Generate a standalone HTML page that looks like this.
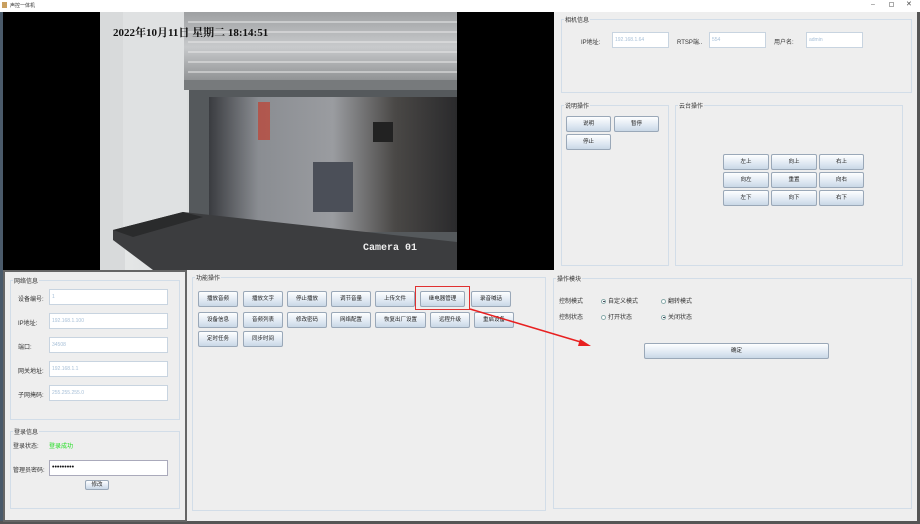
<!DOCTYPE html>
<html><head><meta charset="utf-8">
<style>
*{margin:0;padding:0;box-sizing:border-box}
body{width:920px;height:524px;overflow:hidden;background:#eeeeee;font-family:"Liberation Sans","Noto Sans CJK SC",sans-serif;font-size:6px;color:#222;position:relative}
.a{position:absolute}
.grp{position:absolute;border:1px solid #d2dde8}
.gt{position:absolute;top:-5px;left:2px;background:#eeeeee;padding:0 1px;font-size:6px;color:#333}
.fld{position:absolute;background:#fff;border:1px solid #c8d4e0;height:16px;font-size:5px;color:#a8c0d8;padding-left:2px;line-height:14px}
.btn{position:absolute;height:16px;border:1px solid #9aa8b8;border-radius:2px;background:linear-gradient(#fdfeff,#dfe8f2 60%,#c9d7e6);font-size:5.5px;text-align:center;line-height:14px;color:#222}
.lbl{position:absolute;font-size:6px;color:#333}
.rad{display:inline-block;width:5px;height:5px;border:1px solid #8aa;border-radius:50%;background:#fff;vertical-align:middle;margin-right:2px;position:relative}
.rad.on::after{content:"";position:absolute;left:1px;top:1px;width:1.5px;height:1.5px;background:#334;border-radius:50%}
</style></head><body>
<!-- title bar -->
<div class="a" style="left:0;top:0;width:920px;height:12px;background:#fff"></div>
<div class="a" style="left:2px;top:2px;width:5px;height:6px;background:#c9a060"></div>
<div class="a" style="left:10px;top:2px;font-size:5px;color:#333">声控一体机</div>
<div class="a" style="left:871px;top:1px;font-size:7px;color:#666">–</div>
<div class="a" style="left:889px;top:2px;width:5px;height:5px;border:1px solid #aaa"></div>
<div class="a" style="left:906px;top:0px;font-size:7px;color:#444">✕</div>
<div class="a" style="left:0;top:12px;width:3px;height:512px;background:#4a5a6a"></div>
<div class="a" style="left:917px;top:12px;width:3px;height:512px;background:#555"></div>
<div class="a" style="left:0;top:521px;width:920px;height:3px;background:#555"></div>

<!-- video -->
<div class="a" style="left:3px;top:12px;width:551px;height:258px;background:#000;overflow:hidden">
<svg width="551" height="258" style="position:absolute;left:0;top:0">
<defs>
<linearGradient id="wall" x1="0" x2="1"><stop offset="0" stop-color="#e8eaea"/><stop offset="0.5" stop-color="#cfd1d2"/><stop offset="1" stop-color="#b5b8ba"/></linearGradient>
<linearGradient id="blind" x1="0" y1="0" x2="0" y2="1"><stop offset="0" stop-color="#9ea0a2"/><stop offset="0.5" stop-color="#c8cacc"/><stop offset="1" stop-color="#8e9092"/></linearGradient>
<linearGradient id="glass" x1="0" x2="1"><stop offset="0" stop-color="#3a3c40"/><stop offset="0.2" stop-color="#8a8d92"/><stop offset="0.5" stop-color="#9a9ca0"/><stop offset="0.75" stop-color="#4a4846"/><stop offset="1" stop-color="#2a2a2c"/></linearGradient>
</defs>
<rect x="97" y="0" width="357" height="258" fill="url(#wall)"/>
<rect x="97" y="0" width="25" height="258" fill="#d8dadb"/>
<rect x="120" y="0" width="64" height="230" fill="#dfe1e2"/>
<rect x="181" y="0" width="273" height="70" fill="url(#blind)"/>
<g stroke="#e8e8e8" stroke-width="1.5" opacity="0.7">
<line x1="185" y1="10" x2="454" y2="10"/><line x1="185" y1="20" x2="454" y2="20"/><line x1="185" y1="30" x2="454" y2="30"/><line x1="185" y1="40" x2="454" y2="40"/><line x1="185" y1="50" x2="454" y2="50"/><line x1="185" y1="60" x2="454" y2="60"/></g>
<rect x="181" y="68" width="273" height="10" fill="#777a7c"/>
<rect x="186" y="78" width="268" height="155" fill="#55595c"/>
<rect x="206" y="85" width="248" height="135" fill="url(#glass)"/>
<rect x="310" y="150" width="40" height="50" fill="#4b4f58"/>
<rect x="370" y="110" width="20" height="20" fill="#222"/>
<rect x="255" y="90" width="12" height="38" fill="#c04030" opacity="0.7"/>
<polygon points="110,218 180,200 454,230 454,258 150,258 110,228" fill="#3c3d3f"/>
<polygon points="110,218 180,200 200,205 130,225" fill="#2a2b2c"/>
<text x="110" y="24" font-family="Liberation Serif,'Noto Serif CJK SC',serif" font-weight="bold" font-size="11" fill="#111">2022年10月11日 星期二 18:14:51</text>
<text x="360" y="238" font-family="Liberation Mono,monospace" font-weight="bold" font-size="10" fill="#eee">Camera 01</text>
</svg>
</div>

<!-- top right -->
<div class="grp" style="left:561px;top:19px;width:351px;height:74px"><span class="gt">相机信息</span></div>
<div class="lbl" style="left:581px;top:37px">IP地址:</div>
<div class="fld" style="left:612px;top:32px;width:57px">192.168.1.64</div>
<div class="lbl" style="left:677px;top:37px">RTSP端..</div>
<div class="fld" style="left:709px;top:32px;width:57px">554</div>
<div class="lbl" style="left:774px;top:37px">用户名:</div>
<div class="fld" style="left:806px;top:32px;width:57px">admin</div>

<div class="grp" style="left:561px;top:105px;width:108px;height:161px"><span class="gt">说明操作</span></div>
<div class="btn" style="left:566px;top:116px;width:45px">说明</div>
<div class="btn" style="left:614px;top:116px;width:45px">暂停</div>
<div class="btn" style="left:566px;top:134px;width:45px">停止</div>

<div class="grp" style="left:675px;top:105px;width:228px;height:161px"><span class="gt">云台操作</span></div>
<div class="btn" style="left:723px;top:154px;width:46px">左上</div>
<div class="btn" style="left:771px;top:154px;width:46px">向上</div>
<div class="btn" style="left:819px;top:154px;width:45px">右上</div>
<div class="btn" style="left:723px;top:172px;width:46px">向左</div>
<div class="btn" style="left:771px;top:172px;width:46px">重置</div>
<div class="btn" style="left:819px;top:172px;width:45px">向右</div>
<div class="btn" style="left:723px;top:190px;width:46px">左下</div>
<div class="btn" style="left:771px;top:190px;width:46px">向下</div>
<div class="btn" style="left:819px;top:190px;width:45px">右下</div>

<!-- left bottom -->
<div class="a" style="left:3px;top:270px;width:184px;height:252px;border:2px solid #666"></div>
<div class="grp" style="left:10px;top:280px;width:170px;height:140px"><span class="gt">网络信息</span></div>
<div class="lbl" style="left:18px;top:294px">设备编号:</div>
<div class="fld" style="left:49px;top:289px;width:119px">1</div>
<div class="lbl" style="left:18px;top:318px">IP地址:</div>
<div class="fld" style="left:49px;top:313px;width:119px">192.168.1.100</div>
<div class="lbl" style="left:18px;top:342px">端口:</div>
<div class="fld" style="left:49px;top:337px;width:119px">34508</div>
<div class="lbl" style="left:18px;top:366px">网关地址:</div>
<div class="fld" style="left:49px;top:361px;width:119px">192.168.1.1</div>
<div class="lbl" style="left:18px;top:390px">子网掩码:</div>
<div class="fld" style="left:49px;top:385px;width:119px">255.255.255.0</div>
<div class="grp" style="left:10px;top:431px;width:170px;height:78px"><span class="gt">登录信息</span></div>
<div class="lbl" style="left:13px;top:441px">登录状态:</div>
<div class="lbl" style="left:49px;top:441px;color:#22dd22">登录成功</div>
<div class="lbl" style="left:13px;top:465px">管理员密码:</div>
<div class="fld" style="left:49px;top:460px;width:119px;color:#111;font-size:7px;border-color:#aab">•••••••••</div>
<div class="btn" style="left:85px;top:480px;width:24px;height:10px;line-height:8px">修改</div>

<!-- function ops -->
<div class="grp" style="left:192px;top:277px;width:354px;height:234px"><span class="gt">功能操作</span></div>
<div class="btn" style="left:198px;top:291px;width:40px">播放音频</div>
<div class="btn" style="left:243px;top:291px;width:40px">播放文字</div>
<div class="btn" style="left:287px;top:291px;width:40px">停止播放</div>
<div class="btn" style="left:331px;top:291px;width:40px">调节音量</div>
<div class="btn" style="left:375px;top:291px;width:40px">上传文件</div>
<div class="btn" style="left:420px;top:291px;width:45px">继电器管理</div>
<div class="btn" style="left:471px;top:291px;width:40px">录音喊话</div>
<div class="a" style="left:415px;top:286px;width:55px;height:24px;border:1.5px solid #e03030"></div>
<div class="btn" style="left:198px;top:312px;width:40px">设备信息</div>
<div class="btn" style="left:243px;top:312px;width:40px">音频列表</div>
<div class="btn" style="left:287px;top:312px;width:40px">修改密码</div>
<div class="btn" style="left:331px;top:312px;width:40px">网络配置</div>
<div class="btn" style="left:375px;top:312px;width:51px">恢复出厂设置</div>
<div class="btn" style="left:430px;top:312px;width:40px">远程升级</div>
<div class="btn" style="left:474px;top:312px;width:40px">重启设备</div>
<div class="btn" style="left:198px;top:331px;width:40px">定时任务</div>
<div class="btn" style="left:243px;top:331px;width:40px">同步时间</div>

<!-- right op -->
<div class="grp" style="left:553px;top:278px;width:359px;height:231px"><span class="gt">操作模块</span></div>
<div class="lbl" style="left:559px;top:296px">控制模式</div>
<div class="lbl" style="left:601px;top:296px"><span class="rad on"></span>自定义模式</div>
<div class="lbl" style="left:661px;top:296px"><span class="rad"></span>翻转模式</div>
<div class="lbl" style="left:559px;top:312px">控制状态</div>
<div class="lbl" style="left:601px;top:312px"><span class="rad"></span>打开状态</div>
<div class="lbl" style="left:661px;top:312px"><span class="rad on"></span>关闭状态</div>
<div class="btn" style="left:644px;top:343px;width:185px">确定</div>

<svg class="a" style="left:0;top:0" width="920" height="524">
<line x1="470" y1="309" x2="584" y2="343" stroke="#e82020" stroke-width="1.5"/>
<polygon points="591,346 580,339 578,346" fill="#e82020"/>
</svg>
</body></html>
